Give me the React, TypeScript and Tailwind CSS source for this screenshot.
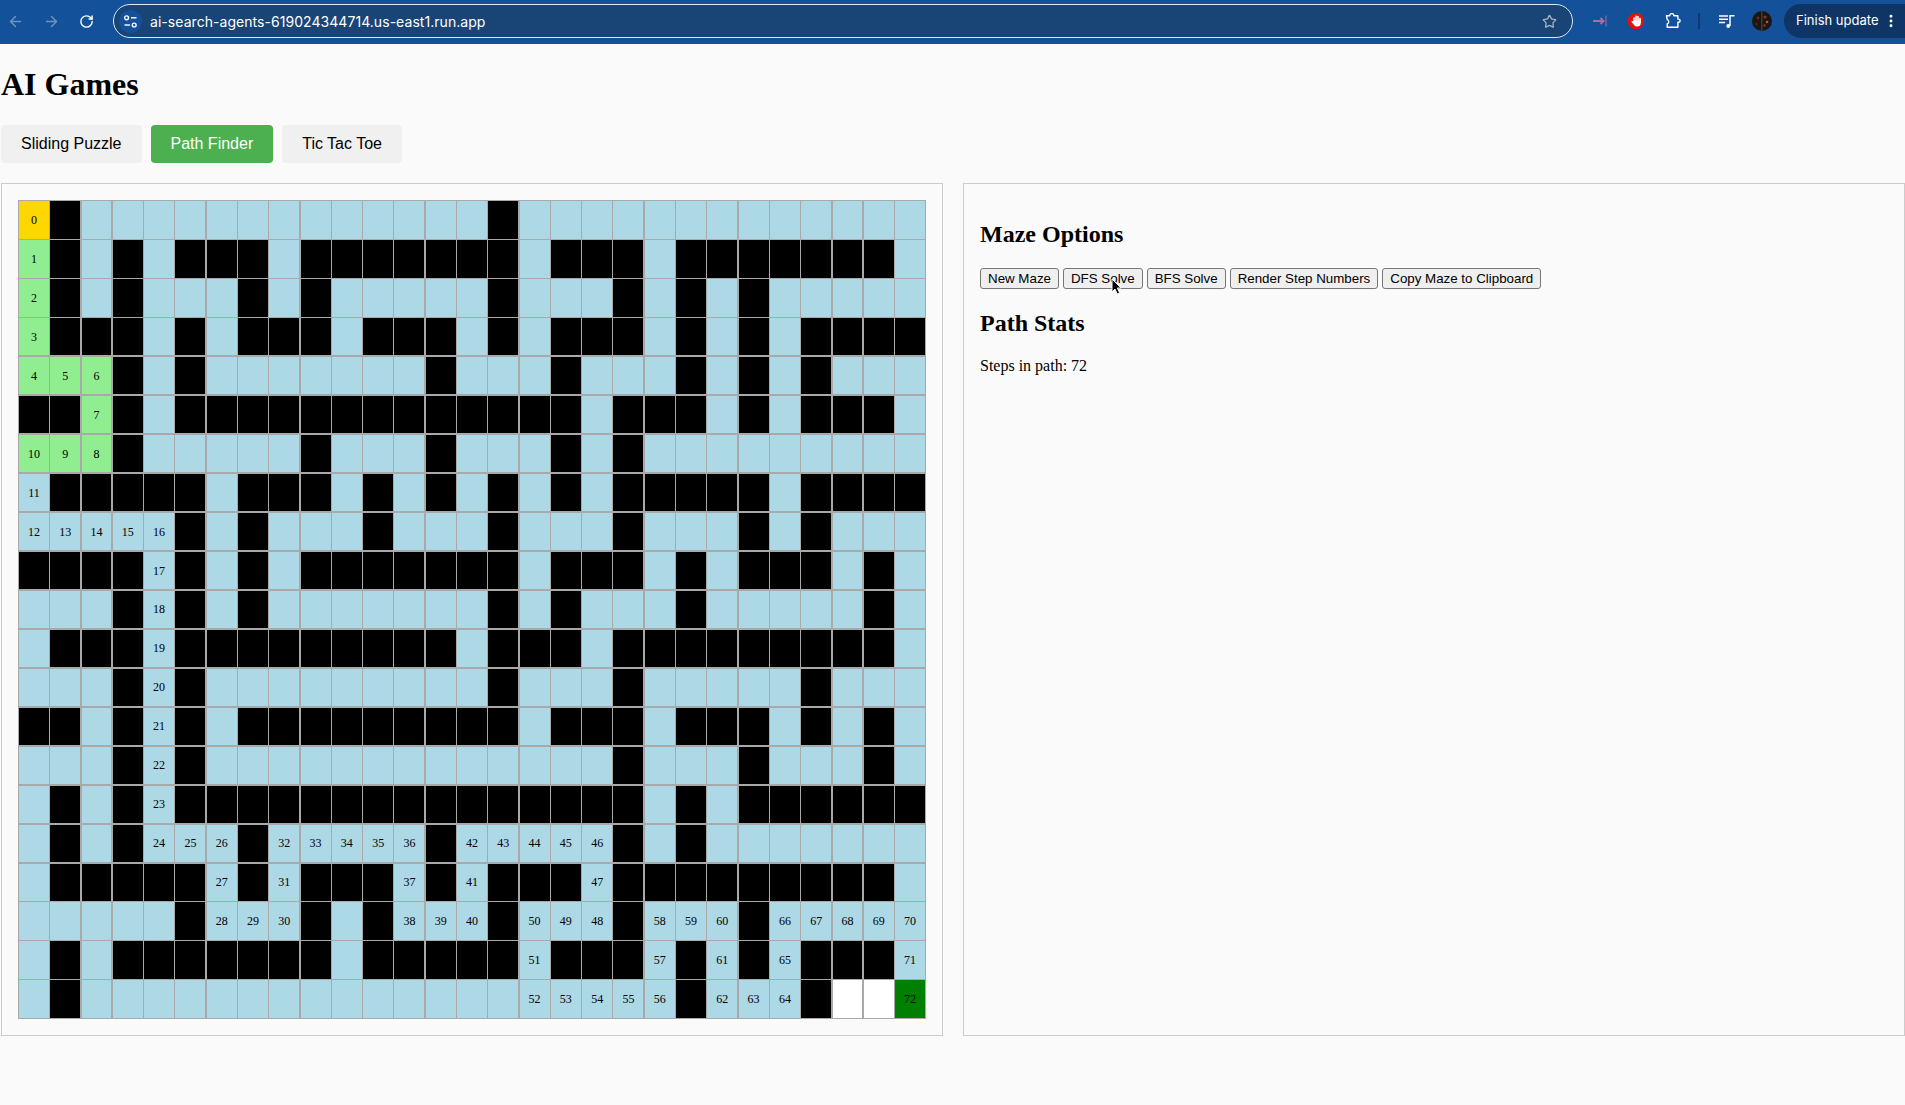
import React from "react";
import { ArrowLeft, ArrowRight, RotateCw, Star, EllipsisVertical } from "lucide-react";

const MAZE = [
  ".#.............#.............",
  ".#.#.###.#######.###.#######.",
  ".#.#...#.#.....#...#.#.#.....",
  ".###.#.###.###.#.###.#.#.####",
  "...#.#.......#...#...#.#.#...",
  "##.#.#############.###.#.###.",
  "...#.....#...#...#.#.........",
  ".#####.###.#.#.#.#.#####.####",
  ".....#.#...#...#...#...#.#...",
  "####.#.#.#######.###.#.###.#.",
  "...#.#.#.......#.#...#.....#.",
  ".###.#########.###.#########.",
  "...#.#.........#...#.....#...",
  "##.#.#.#########.###.###.#.#.",
  "...#.#.............#...#...#.",
  ".#.#.###############.#.######",
  ".#.#...#.....#.....#.#.......",
  ".#####.#.###.#.###.#########.",
  ".....#...#.#...#...#...#.....",
  ".#.#######.#####.###.#.#.###.",
  ".#...................#...#oo.",
];

const PATH: [number, number][] = [
  [0,0],[1,0],[2,0],[3,0],[4,0],[4,1],[4,2],[5,2],[6,2],[6,1],[6,0],[7,0],[8,0],[8,1],[8,2],[8,3],[8,4],
  [9,4],[10,4],[11,4],[12,4],[13,4],[14,4],[15,4],[16,4],[16,5],[16,6],[17,6],[18,6],[18,7],[18,8],[17,8],
  [16,8],[16,9],[16,10],[16,11],[16,12],[17,12],[18,12],[18,13],[18,14],[17,14],[16,14],[16,15],[16,16],
  [16,17],[16,18],[17,18],[18,18],[18,17],[18,16],[19,16],[20,16],[20,17],[20,18],[20,19],[20,20],[19,20],
  [18,20],[18,21],[18,22],[19,22],[20,22],[20,23],[20,24],[19,24],[18,24],[18,25],[18,26],[18,27],[18,28],
  [19,28],[20,28],
];

const stepAt = new Map<string, number>();
PATH.forEach(([r, c], i) => stepAt.set(`${r},${c}`, i));

function cellClass(ch: string, step: number | undefined) {
  if (step === 0) return "bg-[#ffd700]";
  if (step === 72) return "bg-[#008000]";
  if (step !== undefined && step <= 10) return "bg-[#90ee90]";
  if (ch === "#") return "bg-black";
  if (ch === "o") return "bg-white";
  return "bg-[#add8e6]";
}

function BrowserBar() {
  return (
    <div className="flex h-[44px] items-center bg-[#13519a] pb-[2px] font-['Inter',sans-serif] text-white">
      <div className="flex w-[113px] items-center pl-[7px]">
        <ArrowLeft className="h-[17px] w-[17px] text-[#6f95c4]" strokeWidth={2} />
        <ArrowRight className="ml-[19px] h-[17px] w-[17px] text-[#6f95c4]" strokeWidth={2} />
        <RotateCw className="ml-[19px] h-[15px] w-[15px] text-white" strokeWidth={2.2} />
      </div>
      <div className="flex h-[34px] w-[1460px] items-center rounded-full border border-[#dfe8f2] bg-[#184476] pl-[5px] pr-[15px]">
        <div className="flex h-[23px] w-[23px] items-center justify-center rounded-full bg-[#13519a]">
          <svg className="h-[15px] w-[15px]" viewBox="0 0 15 15" fill="none" stroke="#fff" strokeWidth="1.4">
            <circle cx="3.6" cy="3.8" r="1.9" />
            <path d="M8 3.8h5.5" />
            <path d="M1.5 11h5.5" />
            <circle cx="11.2" cy="11" r="1.9" />
          </svg>
        </div>
        <span className="ml-[8px] text-[14px] tracking-[0.05px]">ai-search-agents-619024344714.us-east1.run.app</span>
        <Star className="ml-auto h-[15px] w-[15px] text-[#a9b4c2]" strokeWidth={2} />
      </div>
      <svg className="ml-[20px] h-[14px] w-[14px]" viewBox="0 0 14 14" fill="none" stroke="#b06a9e">
        <path d="M0 7h10M7.5 4l3 3-3 3" strokeWidth="2" />
        <path d="M13 1.5v11" strokeWidth="1" />
      </svg>
      <svg className="ml-[21px] h-[16px] w-[16px]" viewBox="0 0 16 16">
        <path d="M4.7 0h6.6L16 4.7v6.6L11.3 16H4.7L0 11.3V4.7z" fill="#e01010" />
        <path d="M6 8V5M8 8V3.2M10 8V3.6M12 9V5.6" stroke="#fff" strokeWidth="1.6" strokeLinecap="round" />
        <path d="M5.2 7.5h7.6V10c0 2.4-1.4 3.6-3.5 3.6-1.7 0-2.7-.8-3.6-2.2L3.6 9c-.4-.8.6-1.5 1.3-.8l.3.3z" fill="#fff" />
      </svg>
      <svg className="ml-[21px] h-[16px] w-[16px]" viewBox="0 0 16 16" fill="none" stroke="#fff" strokeWidth="1.4" strokeLinejoin="round">
        <path d="M1.5 2.7h3.2a2.1 2.1 0 0 1 4.2 0h4v3.4h.6a1.6 1.6 0 0 1 0 3.2h-.6v5H2.2v-3.4a2.2 2.2 0 0 0 0-4.2z" />
      </svg>
      <div className="ml-[17px] h-[16px] w-[2px] bg-[#0e3a6e]" />
      <svg className="ml-[19px] h-[16px] w-[16px]" viewBox="0 0 16 16" fill="none" stroke="#fff" strokeWidth="1.5">
        <path d="M0 3h9M0 6.3h9M0 9.6h6" />
        <path d="M11 13V2.8h4.5" />
        <circle cx="9.2" cy="13" r="1.9" fill="#fff" stroke="none" />
      </svg>
      <svg className="ml-[17px] h-[20px] w-[20px]" viewBox="0 0 20 20">
        <circle cx="10" cy="10" r="10" fill="#1c1614" />
        <rect x="9" y="0" width="1.5" height="20" fill="#3a3a3a" />
        <circle cx="6" cy="7" r="1.4" fill="#6f2a1c" />
        <circle cx="13" cy="6" r="1.6" fill="#8a3a22" />
        <circle cx="15" cy="11" r="1.3" fill="#a8622c" />
        <circle cx="12.5" cy="14.5" r="1.3" fill="#7a3a20" />
        <circle cx="4.5" cy="13" r="1.2" fill="#4a2a22" />
      </svg>
      <div className="ml-[12px] flex h-[34px] w-[121px] items-center rounded-l-full bg-[#0f3566] pl-[12px] text-[13px]">
        <span className="whitespace-nowrap">Finish update</span>
        <EllipsisVertical className="ml-[5px] h-[16px] w-[16px] shrink-0" strokeWidth={2.4} />
      </div>
    </div>
  );
}

function Tab({ label, active }: { label: string; active?: boolean }) {
  return (
    <button
      className={
        active
          ? "h-[38px] rounded-[4px] bg-[#4caf50] px-[20px] text-[16px] text-white"
          : "h-[38px] rounded-[4px] bg-[#f0f0f0] px-[20px] text-[16px] text-black"
      }
    >
      {label}
    </button>
  );
}

function Maze() {
  return (
    <div className="grid h-[819px] w-[908px] grid-cols-[repeat(29,minmax(0,1fr))] grid-rows-[repeat(21,minmax(0,1fr))] gap-[1.4px] bg-[#a9a9a9] p-px">
      {MAZE.flatMap((row, r) =>
        row.split("").map((ch, c) => {
          const step = stepAt.get(`${r},${c}`);
          return (
            <div key={`${r}-${c}`} className={`flex items-center justify-center text-[12px] text-black ${cellClass(ch, step)}`}>
              {step}
            </div>
          );
        })
      )}
    </div>
  );
}

function OptionButton({ label, cursor }: { label: string; cursor?: boolean }) {
  return (
    <button className="relative h-[21px] rounded-[3px] border border-[#767676] bg-[#efefef] px-[7px] font-['Liberation_Sans',Arial,sans-serif] text-[13.33px] text-black">
      {label}
      {cursor && (
        <svg className="absolute left-[47px] top-[9px] h-[18px] w-[12px]" viewBox="0 0 12 18">
          <path d="M1 1v13l3-3 2.2 5 2.4-1-2.2-5H10z" fill="#000" stroke="#fff" strokeWidth="1" />
        </svg>
      )}
    </button>
  );
}

export default function App() {
  return (
    <div className="min-h-screen bg-[#fafafa] font-['Liberation_Serif',serif] text-black">
      <BrowserBar />
      <div className="pl-px">
        <h1 className="my-[22px] text-[32px] font-bold leading-[37px]">AI Games</h1>
        <div className="flex gap-[9px] font-['Liberation_Sans',Arial,sans-serif]">
          <Tab label="Sliding Puzzle" />
          <Tab label="Path Finder" active />
          <Tab label="Tic Tac Toe" />
        </div>
        <div className="mt-[20px] flex gap-[20px]">
          <div className="border border-[#cccccc] p-[16px]">
            <Maze />
          </div>
          <div className="flex-1 border border-[#cccccc] p-[16px]">
            <h2 className="mt-[21px] text-[24px] font-bold leading-[27px]">Maze Options</h2>
            <div className="mt-[20px] flex gap-[4px]">
              <OptionButton label="New Maze" />
              <OptionButton label="DFS Solve" cursor />
              <OptionButton label="BFS Solve" />
              <OptionButton label="Render Step Numbers" />
              <OptionButton label="Copy Maze to Clipboard" />
            </div>
            <h2 className="mt-[21px] text-[24px] font-bold leading-[27px]">Path Stats</h2>
            <p className="mt-[20px] text-[16px] leading-[18px]">Steps in path: 72</p>
          </div>
        </div>
      </div>
    </div>
  );
}
